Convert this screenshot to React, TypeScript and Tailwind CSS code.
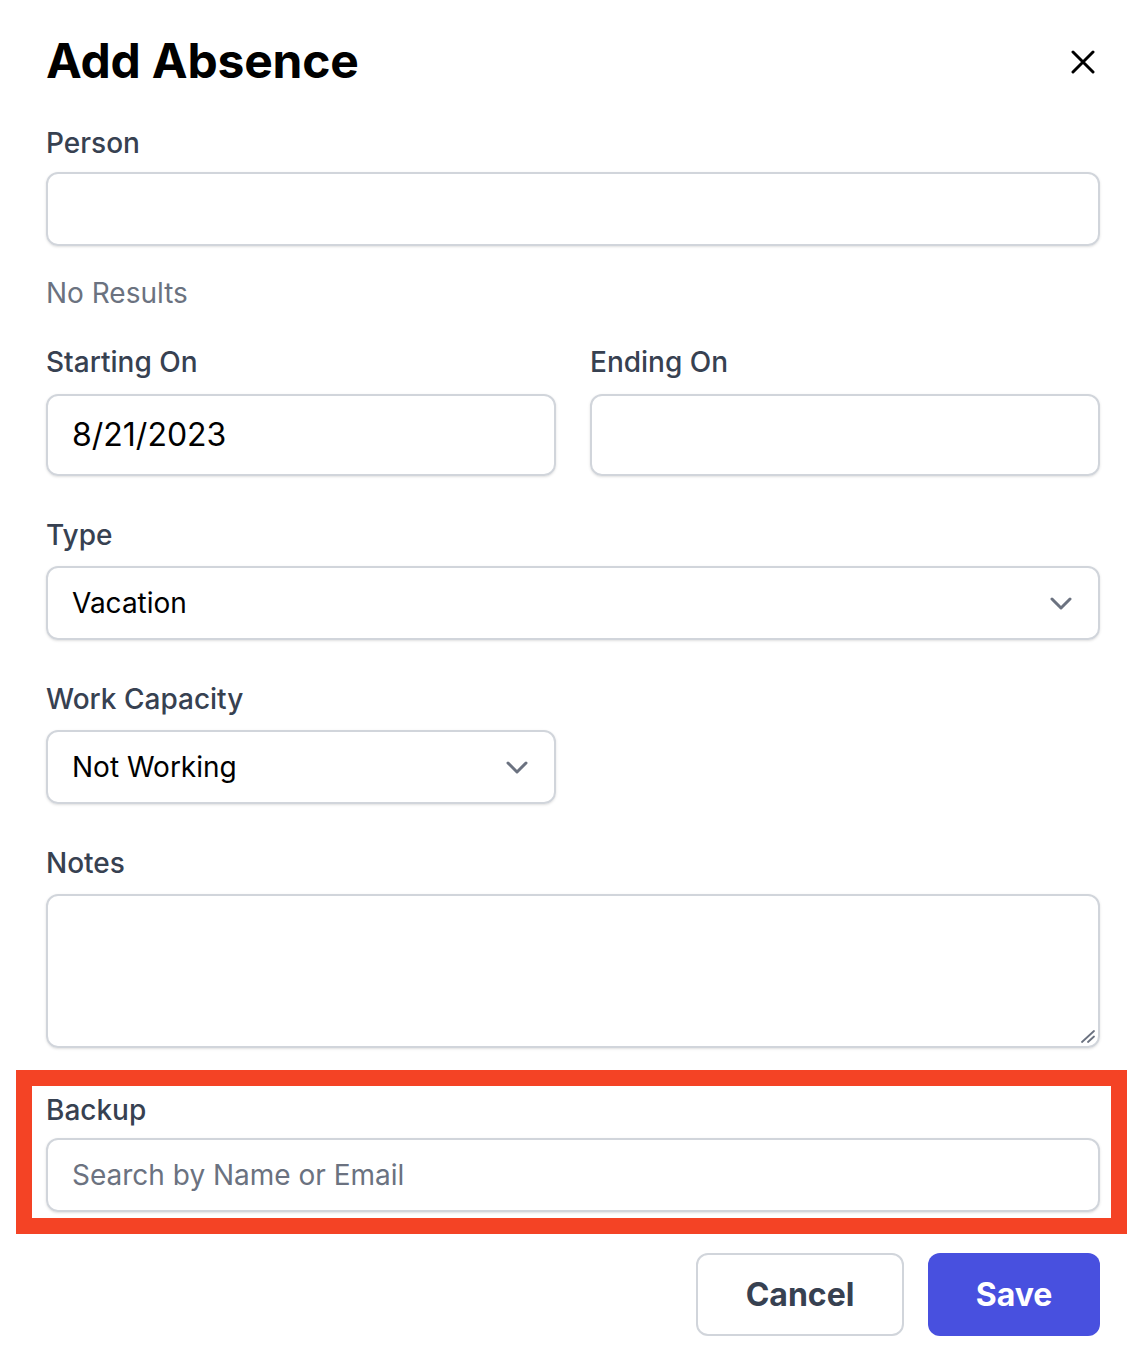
import React from "react";

const Chevron = () => (
  <svg width="22" height="13" viewBox="0 0 22 13" fill="none" className="shrink-0">
    <polyline points="2,2 11,11 20,2" stroke="#6b7280" strokeWidth="3" strokeLinecap="round" strokeLinejoin="round" />
  </svg>
);

const Label = ({ children }: { children: React.ReactNode }) => (
  <div className="text-[28px] leading-[40px] font-medium text-[#374151]">{children}</div>
);

export default function App() {
  return (
    <div
      className="w-[1148px] h-[1352px] bg-white pl-[46px] pr-[48px] pt-[37px] text-black"
      style={{ fontFamily: "Inter, 'Noto Sans', sans-serif" }}
    >
      <div className="flex items-center justify-between h-[48px]">
        <h1 className="text-[48px] leading-[48px] font-bold tracking-[-0.2px]">Add Absence</h1>
        <svg width="24" height="24" viewBox="0 0 24 24" fill="none" className="mr-[5px] mt-[2px]">
          <path d="M2 2L22 22M22 2L2 22" stroke="#000" strokeWidth="3" strokeLinecap="round" />
        </svg>
      </div>

      <div className="mt-[38px]">
        <Label>Person</Label>
        <div className="mt-[9px] h-[74px] rounded-[12px] border-2 border-[#d1d5db] shadow-sm" />
      </div>

      <div className="mt-[27px] text-[28px] leading-[40px] text-[#6b7280]">No Results</div>

      <div className="mt-[29px] grid grid-cols-2 gap-[34px]">
        <div>
          <Label>Starting On</Label>
          <div className="mt-[12px] h-[82px] rounded-[12px] border-2 border-[#d1d5db] shadow-sm flex items-center px-[24px] text-[32px]">
            8/21/2023
          </div>
        </div>
        <div>
          <Label>Ending On</Label>
          <div className="mt-[12px] h-[82px] rounded-[12px] border-2 border-[#d1d5db] shadow-sm" />
        </div>
      </div>

      <div className="mt-[39px]">
        <Label>Type</Label>
        <div className="mt-[11px] h-[74px] rounded-[12px] border-2 border-[#d1d5db] shadow-sm flex items-center justify-between pl-[24px] pr-[26px] text-[28px]">
          <span>Vacation</span>
          <Chevron />
        </div>
      </div>

      <div className="mt-[39px]">
        <Label>Work Capacity</Label>
        <div className="mt-[11px] w-[510px] h-[74px] rounded-[12px] border-2 border-[#d1d5db] shadow-sm flex items-center justify-between pl-[24px] pr-[26px] text-[28px]">
          <span>Not Working</span>
          <Chevron />
        </div>
      </div>

      <div className="mt-[39px]">
        <Label>Notes</Label>
        <div className="relative mt-[11px] h-[154px] rounded-[12px] border-2 border-[#d1d5db] shadow-sm">
          <svg width="16" height="14" viewBox="0 0 16 14" className="absolute right-[2px] bottom-[2px]">
            <path d="M2 12L14 1M8 12L14 6.5" stroke="#6b7280" strokeWidth="1.8" strokeLinecap="round" />
          </svg>
        </div>
      </div>

      <div className="mt-[22px] -ml-[30px] -mr-[27px] border-[16px] border-[#f44325] pl-[14px] pr-[11px] pt-[4px] pb-[6px]">
        <Label>Backup</Label>
        <div className="mt-[8px] h-[74px] rounded-[12px] border-2 border-[#d1d5db] shadow-sm flex items-center px-[24px] text-[28px] text-[#6b7280]">
          Search by Name or Email
        </div>
      </div>

      <div className="mt-[19px] flex justify-end gap-[24px]">
        <button className="w-[208px] h-[83px] rounded-[12px] border-2 border-[#d1d5db] bg-white text-[32px] font-bold text-[#374151]">
          Cancel
        </button>
        <button className="w-[172px] h-[83px] rounded-[12px] bg-[#4850df] text-[32px] font-bold text-white">
          Save
        </button>
      </div>
    </div>
  );
}
